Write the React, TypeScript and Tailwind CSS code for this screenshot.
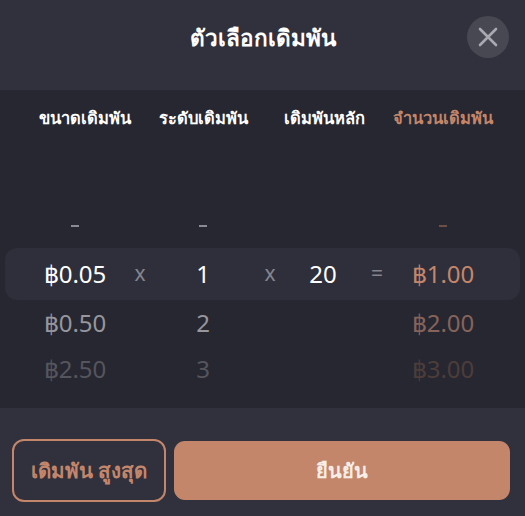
import React from "react";

const F = { fontFamily: '"Noto Sans", "Open Sans", sans-serif' };

function Dash({ c }: { c: string }) {
  return <div className={`w-[8px] h-[2px] ${c}`} />;
}

export default function App() {
  const grid =
    "grid grid-cols-[110px_20px_106px_28px_78px_30px_102px] pl-[20px]";
  const cell = "flex justify-center items-center whitespace-nowrap";
  return (
    <div className="w-[525px] h-[516px] flex flex-col overflow-hidden" style={F}>
      {/* Header */}
      <div className="relative h-[90px] bg-[#31313d] flex items-center justify-center">
        <div className="text-white text-[22.5px] font-bold -mt-[14px]">ตัวเลือกเดิมพัน</div>
        <button className="absolute right-[16px] top-[16px] w-[42px] h-[42px] rounded-full bg-[#484852] flex items-center justify-center">
          <svg width="20" height="20" viewBox="0 0 20 20">
            <path d="M2 2 L18 18 M18 2 L2 18" stroke="#a9a9b1" strokeWidth="2.6" strokeLinecap="round" />
          </svg>
        </button>
      </div>

      {/* Body */}
      <div className="h-[318px] bg-[#272731] flex flex-col">
        <div className={`${grid} h-[56px] items-center text-[16.5px] font-bold`}>
          <div className={`${cell} col-span-2 text-white`}>ขนาดเดิมพัน</div>
          <div className={`${cell} text-white`}>ระดับเดิมพัน</div>
          <div className={`${cell} col-span-3 text-white`}>เดิมพันหลัก</div>
          <div className={`${cell} text-[#c4866a]`}>จำนวนเดิมพัน</div>
        </div>

        <div className="h-[58px]" />

        <div className={`${grid} h-[44px]`}>
          <div className={cell}><Dash c="bg-[#8a8a92]" /></div>
          <div />
          <div className={cell}><Dash c="bg-[#8a8a92]" /></div>
          <div />
          <div />
          <div />
          <div className={cell}><Dash c="bg-[#6e4f45]" /></div>
        </div>

        <div className="mx-[5px] h-[52px] rounded-[12px] bg-[#2f2f3b]">
          <div className={`${grid} h-full -ml-[5px] text-[24px]`}>
            <div className={`${cell} text-white`}>฿0.05</div>
            <div className={`${cell} text-[#85858d] text-[21px]`}>x</div>
            <div className={`${cell} text-white`}>1</div>
            <div className={`${cell} text-[#85858d] text-[21px]`}>x</div>
            <div className={`${cell} text-white`}>20</div>
            <div className={`${cell} text-[#85858d] text-[21px]`}>=</div>
            <div className={`${cell} text-[#c4866a]`}>฿1.00</div>
          </div>
        </div>

        <div className={`${grid} h-[46px] text-[24px]`}>
          <div className={`${cell} text-[#96969c]`}>฿0.50</div>
          <div />
          <div className={`${cell} text-[#96969c]`}>2</div>
          <div />
          <div />
          <div />
          <div className={`${cell} text-[#86635a]`}>฿2.00</div>
        </div>
        <div className={`${grid} h-[46px] text-[24px]`}>
          <div className={`${cell} text-[#55555d]`}>฿2.50</div>
          <div />
          <div className={`${cell} text-[#55555d]`}>3</div>
          <div />
          <div />
          <div />
          <div className={`${cell} text-[#4d3d3a]`}>฿3.00</div>
        </div>
      </div>

      {/* Footer */}
      <div className="flex-1 bg-[#31313d] flex items-start gap-[8px] pt-[31px] px-[12px]">
        <button className="w-[154px] h-[63px] rounded-[12px] border-2 border-[#c4866a] text-[#c4866a] text-[20.5px] font-semibold flex items-center justify-center">
          เดิมพัน สูงสุด
        </button>
        <button className="mt-[2px] w-[336px] h-[59px] rounded-[11px] bg-[#c4866a] text-[#f6eee9] text-[20px] font-bold flex items-center justify-center">
          ยืนยัน
        </button>
      </div>
    </div>
  );
}
